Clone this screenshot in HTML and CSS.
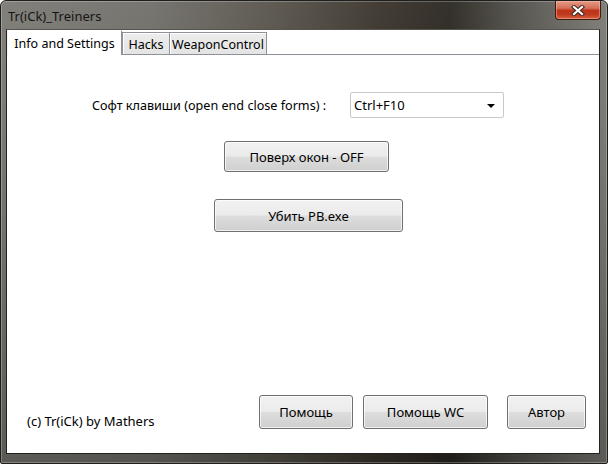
FILE: index.html
```html
<!DOCTYPE html>
<html lang="ru">
<head>
    <meta charset="UTF-8">
    <title>Tr(iCk)_Treiners</title>
    <link rel="stylesheet" href="styles.css">
</head>
<body>

    <div class="window">
        <!-- заголовок окна -->
        <div class="titlebar">
            <span class="title">Tr(iCk)_Treiners</span>
            <div class="close-btn">
                <svg width="14" height="11" viewBox="0 0 14 11">
                    <path d="M3 2 L11 9 M11 2 L3 9" stroke="#3a2a26" stroke-width="4.2" stroke-linecap="square"/>
                    <path d="M3 2 L11 9 M11 2 L3 9" stroke="#ffffff" stroke-width="2.2" stroke-linecap="square"/>
                </svg>
            </div>
        </div>

        <div class="client">
            <!-- вкладки -->
            <div class="tabs">
                <div class="tab tab-info active">Info and Settings</div>
                <div class="tab tab-hacks">Hacks</div>
                <div class="tab tab-weapon">WeaponControl</div>
            </div>

            <div class="tab-page">
                <div class="settings-row">
                    <span class="label">Софт клавиши (open end close forms) :</span>
                    <div class="combo">
                        <span>Ctrl+F10</span>
                        <span class="arrow"></span>
                    </div>
                </div>

                <button class="btn btn-top">Поверх окон - OFF</button>
                <button class="btn btn-kill">Убить PB.exe</button>

                <div class="footer">
                    <span class="copyright">(c) Tr(iCk) by Mathers</span>
                    <div class="footer-buttons">
                        <button class="btn btn-help">Помощь</button>
                        <button class="btn btn-help-wc">Помощь WC</button>
                        <button class="btn btn-author">Автор</button>
                    </div>
                </div>
            </div>
        </div>
    </div>

</body>
</html>
```

FILE: styles.css
```css
html, body {
    margin: 0;
    padding: 0;
}

body {
    width: 608px;
    height: 464px;
    font-family: "Noto Sans", "Open Sans", sans-serif;
    font-size: 13px;
    color: #000;
}

.window {
    box-sizing: border-box;
    width: 608px;
    height: 464px;
    display: flex;
    flex-direction: column;
    border: 1px solid #1e1e1c;
    border-radius: 6px 6px 2px 2px;
    box-shadow: inset 0 0 0 1px rgba(255, 255, 255, 0.25);
    background:
        linear-gradient(180deg, rgba(255, 255, 255, 0.05) 0%, rgba(0, 0, 0, 0) 30%, rgba(0, 0, 0, 0.25) 100%),
        linear-gradient(90deg, #7a7973 0%, #706e68 25%, #57534b 45%, #3a342c 62%, #2a2620 74%, #4e4c46 84%, #7b7a74 100%);
}

.titlebar {
    height: 28px;
    display: flex;
    align-items: flex-start;
    justify-content: space-between;
}

.title {
    margin: 6px 0 0 7px;
    font-size: 13px;
    color: #161616;
}

.close-btn {
    box-sizing: border-box;
    width: 46px;
    height: 19px;
    margin-right: 6px;
    border: 1px solid #3d1b12;
    border-top: none;
    border-radius: 0 0 4px 4px;
    display: flex;
    align-items: center;
    justify-content: center;
    background: linear-gradient(180deg, #e49a86 0%, #d4705a 40%, #bf3318 52%, #c13a1e 75%, #d8603f 100%);
    box-shadow: inset 0 0 0 1px rgba(255, 200, 180, 0.45);
}

.client {
    flex: 1;
    display: flex;
    flex-direction: column;
    margin: 0 7px 9px 5px;
    background: #fff;
    border: 1px solid #22221f;
    border-top-color: #55544f;
}

.tabs {
    height: 24px;
    display: flex;
    align-items: flex-end;
    border-bottom: 1px solid #8e9198;
}

.tab {
    box-sizing: border-box;
    height: 22px;
    display: flex;
    align-items: center;
    justify-content: center;
    padding-top: 2px;
    border: 1px solid #8e9198;
    border-bottom: none;
    background: linear-gradient(180deg, #ececec 0%, #e4e4e4 100%);
    box-shadow: inset 1px 1px 0 #fff;
    font-size: 12.5px;
}

.tab.active {
    height: 25px;
    margin-bottom: -1px;
    padding-top: 0;
    background: #fff;
    border-color: #fff #8e9198 #fff #f4f4f4;
    box-shadow: none;
}

.tab-info { width: 115px; }
.tab-hacks { width: 48px; }
.tab-weapon { width: 98px; margin-left: -1px; }

.tab-page {
    flex: 1;
    display: flex;
    flex-direction: column;
    align-items: flex-start;
}

.settings-row {
    display: flex;
    align-items: center;
    margin: 37px 0 0 85px;
}

.label {
    width: 258px;
    font-size: 12.6px;
}

.combo {
    box-sizing: border-box;
    width: 154px;
    height: 26px;
    padding: 0 8px 0 3px;
    display: flex;
    align-items: center;
    justify-content: space-between;
    border: 1px solid #c5c8ce;
    border-radius: 2px;
    background: #fff;
}

.arrow {
    width: 0;
    height: 0;
    border-left: 4px solid transparent;
    border-right: 4px solid transparent;
    border-top: 4px solid #000;
    margin-top: 2px;
}

.btn {
    box-sizing: border-box;
    font-family: inherit;
    font-size: 13px;
    color: #000;
    padding: 0;
    border: 1px solid #707070;
    border-radius: 3px;
    background: linear-gradient(180deg, #f2f2f2 0%, #ebebeb 48%, #dddddd 52%, #cfcfcf 100%);
    box-shadow: inset 0 0 0 1px rgba(255, 255, 255, 0.7);
}

.btn-top {
    width: 165px;
    height: 31px;
    margin: 23px 0 0 217px;
}

.btn-kill {
    width: 189px;
    height: 33px;
    margin: 27px 0 0 207px;
}

.footer {
    margin-top: auto;
    align-self: stretch;
    display: flex;
    align-items: flex-end;
    padding: 0 0 24px 20px;
}

.copyright {
    margin-bottom: -1px;
}

.footer-buttons {
    display: flex;
    margin-left: auto;
    margin-right: 13px;
}

.btn-help {
    width: 94px;
    height: 34px;
}

.btn-help-wc {
    width: 125px;
    height: 34px;
    margin-left: 10px;
}

.btn-author {
    width: 79px;
    height: 34px;
    margin-left: 19px;
}
```
